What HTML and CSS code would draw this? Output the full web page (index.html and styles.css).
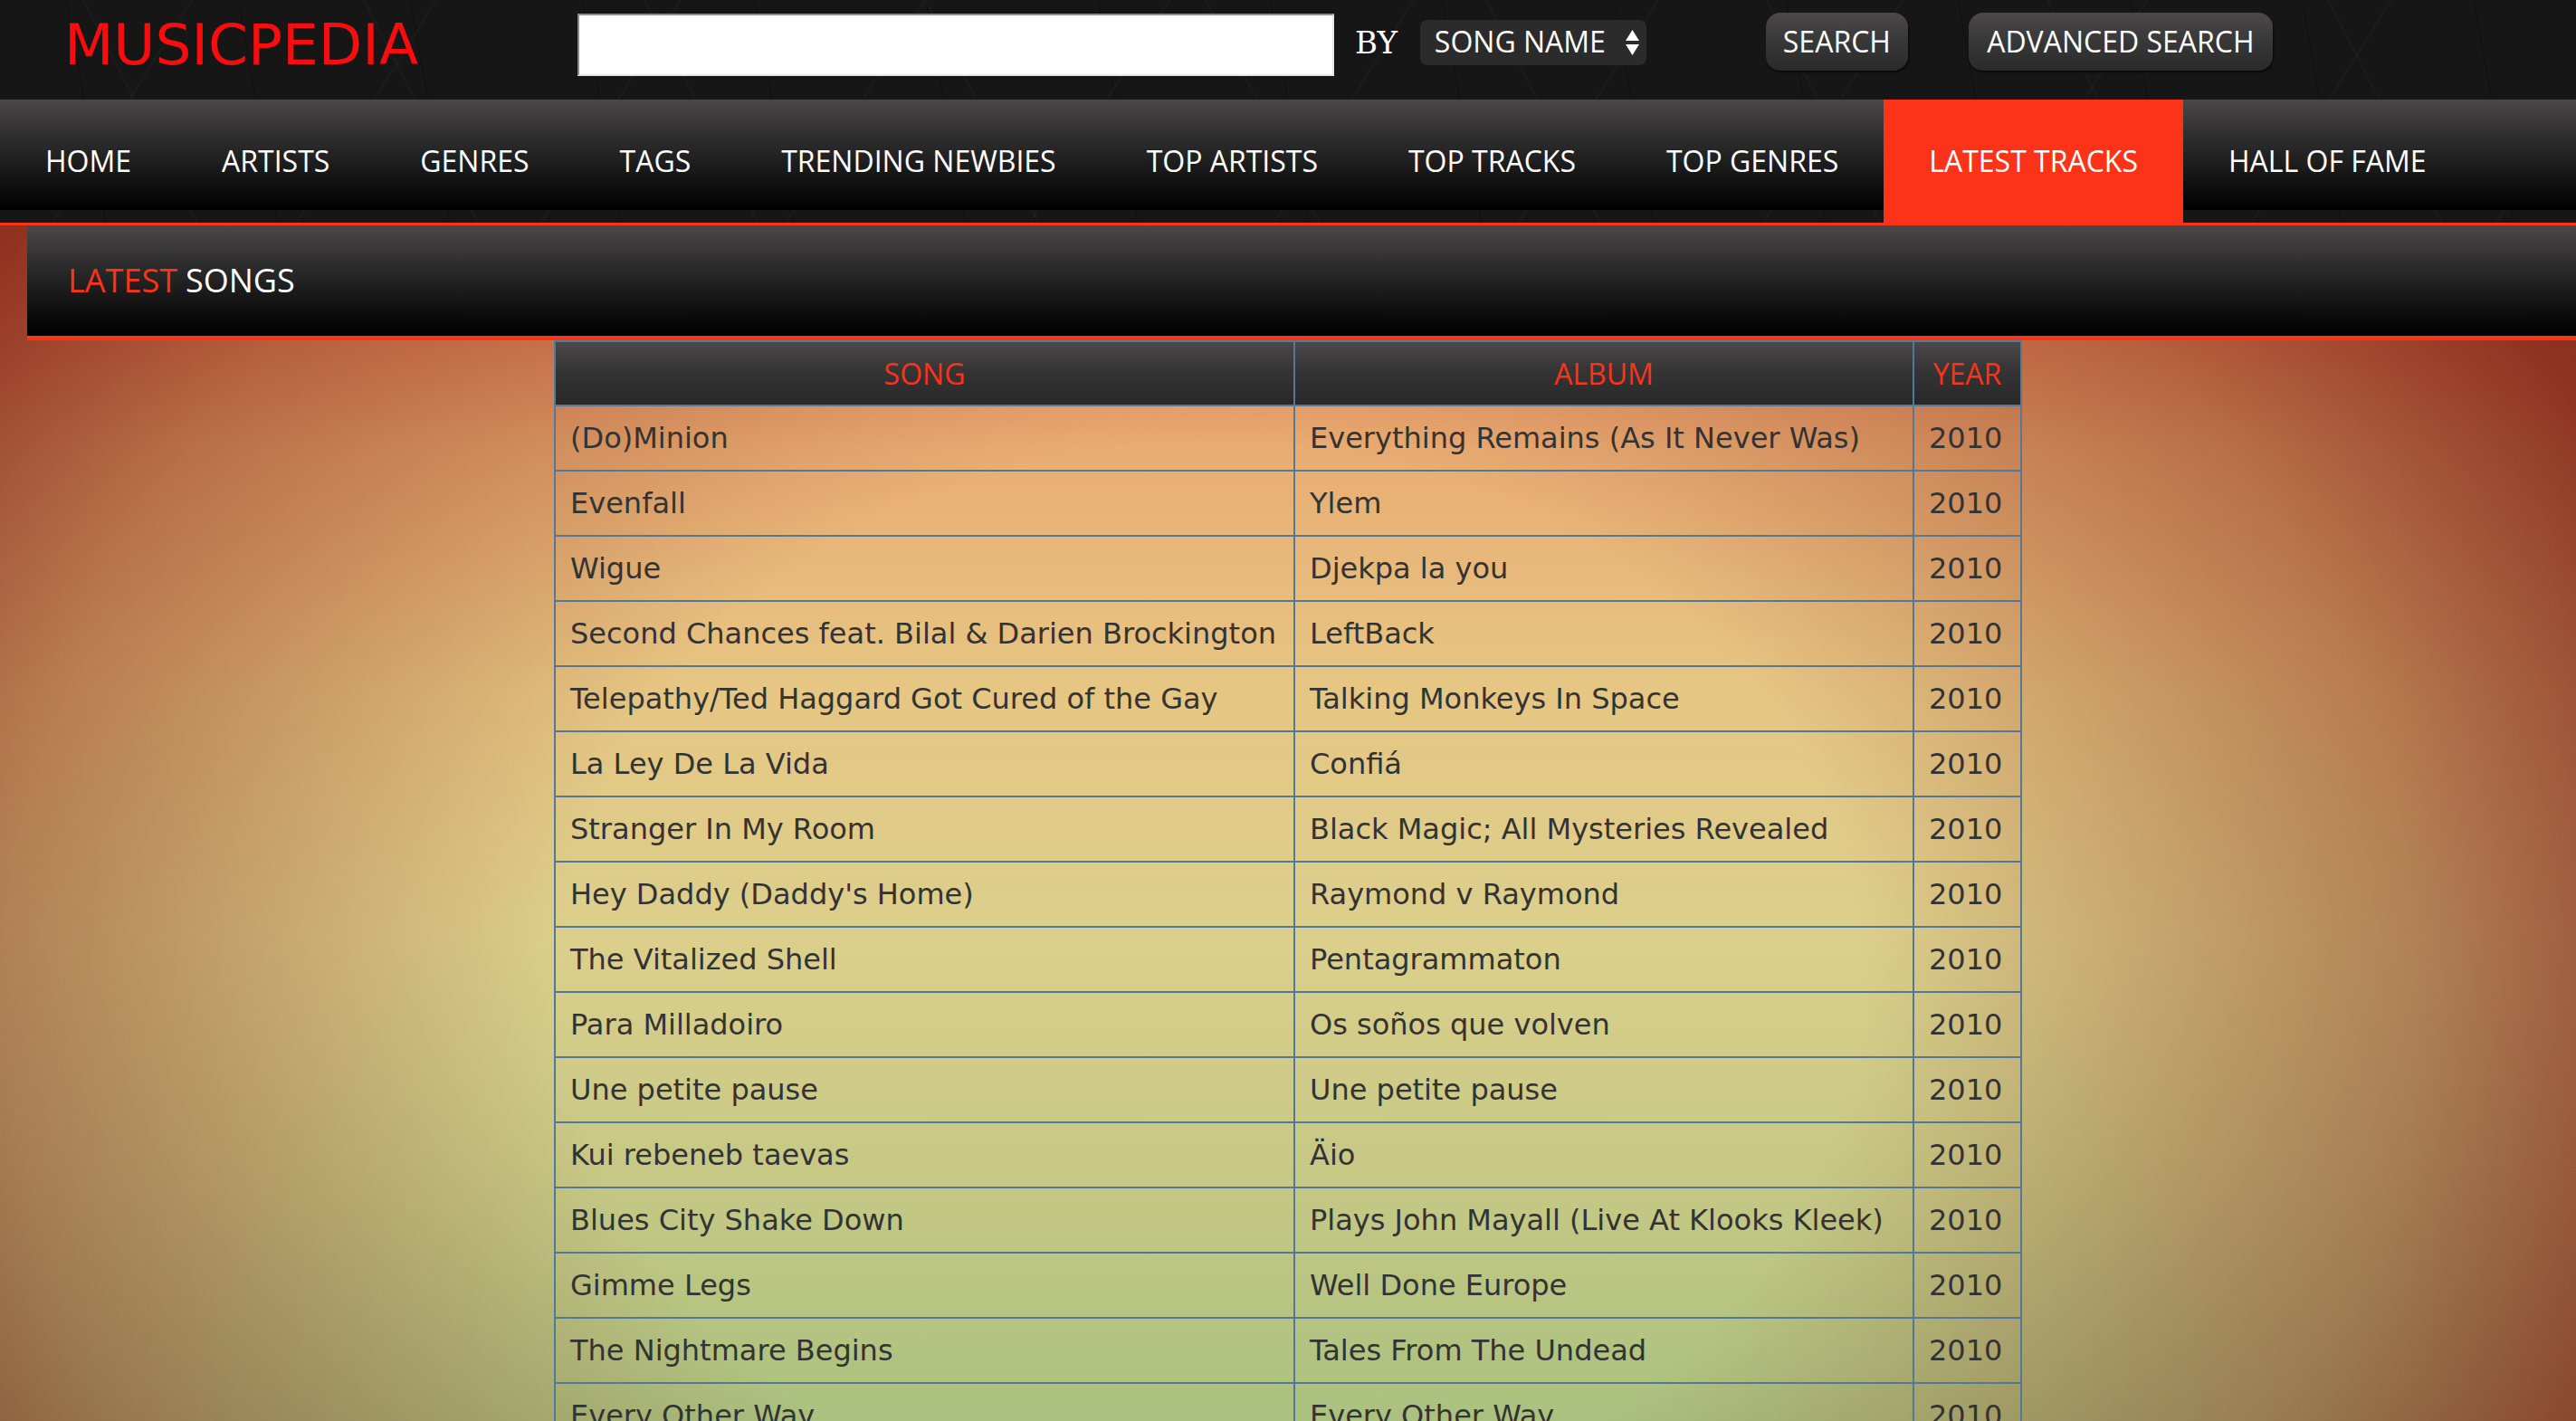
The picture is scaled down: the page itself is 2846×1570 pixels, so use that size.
FILE: index.html
```html
<!DOCTYPE html>
<html lang="en">
<head>
<meta charset="utf-8">
<title>Musicpedia - Latest Tracks</title>
<link rel="stylesheet" href="styles.css">
</head>
<body>
<header class="site-header">
  <div class="top-bar">
    <div class="logo">MUSICPEDIA</div>
    <input class="search-input" type="text" aria-label="Search">
    <span class="by-label">BY</span>
    <div class="select-box">
      <span class="select-text">SONG NAME</span>
      <svg class="select-arrows" width="15" height="28" viewBox="0 0 15 28" aria-hidden="true">
        <polygon points="0,12 7.5,0 15,12" fill="#fff"/>
        <polygon points="0,16 15,16 7.5,28" fill="#fff"/>
      </svg>
    </div>
    <button class="btn btn-search">SEARCH</button>
    <button class="btn btn-advanced">ADVANCED SEARCH</button>
  </div>
  <nav class="main-nav">
    <a class="nav-item" href="#">HOME</a>
    <a class="nav-item" href="#">ARTISTS</a>
    <a class="nav-item" href="#">GENRES</a>
    <a class="nav-item" href="#">TAGS</a>
    <a class="nav-item" href="#">TRENDING NEWBIES</a>
    <a class="nav-item" href="#">TOP ARTISTS</a>
    <a class="nav-item" href="#">TOP TRACKS</a>
    <a class="nav-item" href="#">TOP GENRES</a>
    <a class="nav-item active" href="#">LATEST TRACKS</a>
    <a class="nav-item" href="#">HALL OF FAME</a>
  </nav>
</header>
<main class="content">
  <div class="section-title"><span class="accent">LATEST</span> SONGS</div>
  <table class="songs">
    <colgroup>
      <col class="col-song">
      <col class="col-album">
      <col class="col-year">
    </colgroup>
    <thead>
      <tr><th>SONG</th><th>ALBUM</th><th>YEAR</th></tr>
    </thead>
    <tbody>
      <tr><td>(Do)Minion</td><td>Everything Remains (As It Never Was)</td><td>2010</td></tr>
      <tr><td>Evenfall</td><td>Ylem</td><td>2010</td></tr>
      <tr><td>Wigue</td><td>Djekpa la you</td><td>2010</td></tr>
      <tr><td>Second Chances feat. Bilal &amp; Darien Brockington</td><td>LeftBack</td><td>2010</td></tr>
      <tr><td>Telepathy/Ted Haggard Got Cured of the Gay</td><td>Talking Monkeys In Space</td><td>2010</td></tr>
      <tr><td>La Ley De La Vida</td><td>Confiá</td><td>2010</td></tr>
      <tr><td>Stranger In My Room</td><td>Black Magic; All Mysteries Revealed</td><td>2010</td></tr>
      <tr><td>Hey Daddy (Daddy's Home)</td><td>Raymond v Raymond</td><td>2010</td></tr>
      <tr><td>The Vitalized Shell</td><td>Pentagrammaton</td><td>2010</td></tr>
      <tr><td>Para Milladoiro</td><td>Os soños que volven</td><td>2010</td></tr>
      <tr><td>Une petite pause</td><td>Une petite pause</td><td>2010</td></tr>
      <tr><td>Kui rebeneb taevas</td><td>Äio</td><td>2010</td></tr>
      <tr><td>Blues City Shake Down</td><td>Plays John Mayall (Live At Klooks Kleek)</td><td>2010</td></tr>
      <tr><td>Gimme Legs</td><td>Well Done Europe</td><td>2010</td></tr>
      <tr><td>The Nightmare Begins</td><td>Tales From The Undead</td><td>2010</td></tr>
      <tr><td>Every Other Way</td><td>Every Other Way</td><td>2010</td></tr>
    </tbody>
  </table>
</main>
</body>
</html>
```
FILE: styles.css
```css
html, body {
  margin: 0;
  padding: 0;
}

body {
  min-height: 100vh;
  display: flex;
  flex-direction: column;
  font-family: "Open Sans", "DejaVu Sans", sans-serif;
  background: #161616;
}

.site-header {
  background-color: #161616;
  background-image:
    linear-gradient(63deg, transparent 49.6%, rgba(255,255,255,0.025) 49.8%, rgba(255,255,255,0.025) 50.2%, transparent 50.4%),
    linear-gradient(-58deg, transparent 49.6%, rgba(255,255,255,0.022) 49.8%, rgba(255,255,255,0.022) 50.2%, transparent 50.4%),
    linear-gradient(80deg, transparent 49.7%, rgba(0,0,0,0.25) 49.8%, rgba(0,0,0,0.25) 50.2%, transparent 50.3%);
  background-size: 310px 246px, 270px 246px, 190px 246px;
  border-bottom: 3px solid #fc3219;
}

/* ---------- top bar ---------- */
.top-bar {
  height: 110px;
  display: flex;
  align-items: center;
}

.logo {
  width: 567px;
  padding-left: 71px;
  margin-top: -12px;
  font-family: "DejaVu Sans", Verdana, sans-serif;
  font-size: 63px;
  color: #f70d0d;
  line-height: 1;
}

.search-input {
  box-sizing: border-box;
  width: 836px;
  height: 69px;
  margin: 0;
  margin-top: -12px;
  padding: 0 10px;
  background: #fff;
  border-top: 2px solid #8b8b8b;
  border-left: 2px solid #8b8b8b;
  border-right: 2px solid #e6e6e6;
  border-bottom: 2px solid #e6e6e6;
  outline: none;
}

.by-label {
  margin-left: 23px;
  margin-top: -16px;
  font-family: "DejaVu Serif", "Liberation Serif", serif;
  font-size: 34px;
  color: #fff;
  line-height: 1;
}

.select-box {
  box-sizing: border-box;
  width: 250px;
  height: 50px;
  margin-left: 25px;
  margin-top: -16px;
  padding-left: 16px;
  padding-right: 8px;
  display: flex;
  align-items: center;
  justify-content: space-between;
  background: #2b2b2b;
  border-radius: 8px;
  color: #fff;
  font-size: 32px;
}

.select-text {
  line-height: 1;
  margin-top: -2px;
}

.select-arrows {
  display: block;
}

.btn {
  box-sizing: border-box;
  height: 64px;
  margin-top: -18px;
  padding: 0 18px;
  border: none;
  border-radius: 16px;
  background: linear-gradient(to bottom, #4b494a 0%, #3a3939 45%, #2a2a2a 100%);
  box-shadow: 1px 2px 2px rgba(0,0,0,0.6);
  color: #fff;
  font-family: "Open Sans", sans-serif;
  font-size: 32px;
  line-height: 1;
  cursor: pointer;
}

.btn-search {
  width: 157px;
  margin-left: 132px;
}

.btn-advanced {
  width: 336px;
  margin-left: 67px;
}

/* ---------- nav ---------- */
.main-nav {
  height: 136px;
  display: flex;
  background-image: linear-gradient(to bottom, #4a4849 0%, #2e2d2e 35%, #111 75%, #000 100%);
  background-size: 100% 122px;
  background-repeat: no-repeat;
}

.nav-item {
  display: flex;
  align-items: center;
  padding: 0 50px;
  color: #fff;
  text-decoration: none;
  font-size: 32px;
  line-height: 1;
}

.nav-item.active {
  background: #fc3219;
}

/* ---------- content ---------- */
.content {
  flex: 1;
  background:
    radial-gradient(ellipse 60% 105% at 47% 62%, rgba(130,40,25,0) 42%, rgba(130,42,25,0.47) 78%, rgba(125,32,20,0.85) 100%),
    linear-gradient(180deg, #e0704a 0%, #e9ac72 18%, #e6c683 38%, #dccf8c 58%, #c6c885 78%, #a7c07e 100%);
  overflow: hidden;
}

.section-title {
  margin-left: 30px;
  height: 127px;
  box-sizing: border-box;
  padding-left: 45px;
  display: flex;
  align-items: center;
  background: linear-gradient(to bottom, #4a4849 0%, #2e2d2e 35%, #101010 75%, #000 100%);
  border-bottom: 5px solid #fc3219;
  color: #fff;
  font-size: 36px;
  line-height: 1;
}

.section-title .accent {
  color: #fc3219;
  margin-right: 9px;
}

.songs {
  margin: 0 auto;
  width: 1620px;
  table-layout: fixed;
  border-collapse: collapse;
  font-family: "DejaVu Sans", Verdana, sans-serif;
  font-size: 32px;
  color: #333;
}

.col-song { width: 817px; }
.col-album { width: 684px; }
.col-year { width: 119px; }

.songs th,
.songs td {
  border: 2px solid #52799a;
  height: 72px;
  padding: 0 16px;
  box-sizing: border-box;
  white-space: nowrap;
  overflow: hidden;
  text-align: left;
  font-weight: normal;
  line-height: 1;
}

.songs th {
  height: 71px;
  text-align: center;
  padding: 0;
  background: linear-gradient(to bottom, #4a4849 0%, #363536 45%, #282828 100%);
  color: #fc3219;
  font-family: "Open Sans", sans-serif;
  font-size: 32px;
}
```
